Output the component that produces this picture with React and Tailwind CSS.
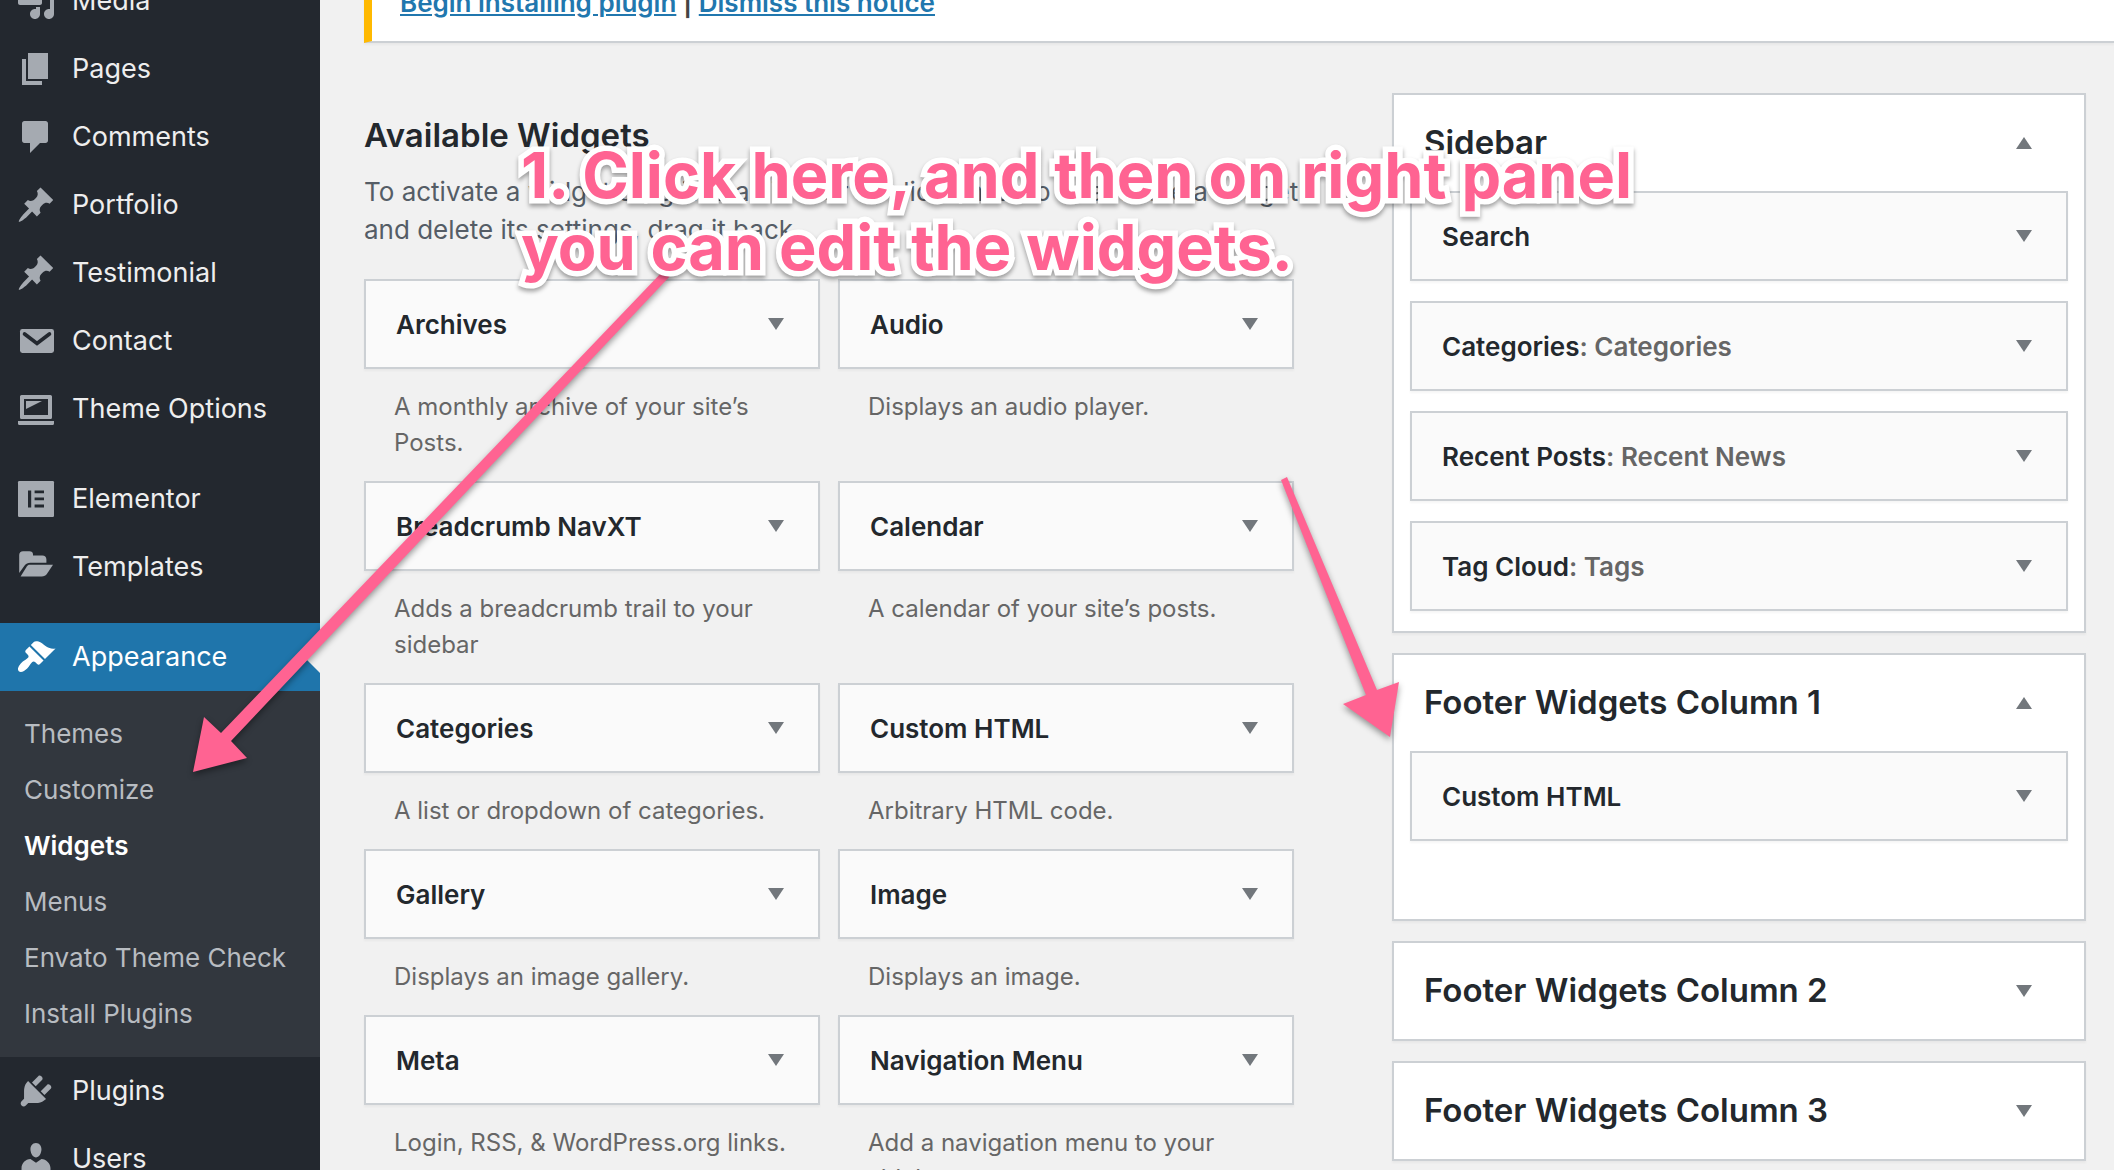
import React from "react";

const ICONS = {
  media: (
    <path d="M13 11V4c0-.55-.45-1-1-1h-1.670L9 1H5L3.670 3H2c-.55 0-1 .45-1 1v7c0 .55.45 1 1 1h10c.55 0 1-.45 1-1zM14 6h5v10.500c0 1.380-1.120 2.500-2.500 2.500S14 17.880 14 16.500s1.120-2.500 2.500-2.500c.17 0 .34.02.5.05V9h-3V6zm-4 8.050V13h2v3.500c0 1.380-1.120 2.500-2.500 2.500S7 17.880 7 16.500 8.120 14 9.500 14c.17 0 .34.02.5.05z" />
  ),
  page: <path d="M6 15V2h10v13H6zM5 16h8v2H3V5h2v11z" />,
  comment: (
    <path d="M4.200 2h10.600c.66 0 1.200.54 1.200 1.200v8.600c0 .66-.54 1.200-1.200 1.200H12l-5 5v-5H4.200c-.66 0-1.200-.54-1.200-1.200V3.200C3 2.540 3.540 2 4.200 2z" />
  ),
  pin: (
    <path d="M10.440 3.020l1.820-1.820 6.360 6.350-1.830 1.820c-1.050-.68-2.480-.57-3.410.36l-.75.75c-.92.93-1.040 2.350-.35 3.410l-1.830 1.820-2.410-2.410-2.800 2.790c-.42.42-3.380 2.710-3.800 2.290s1.860-3.390 2.280-3.810l2.790-2.790L4.100 9.360l1.830-1.820c1.050.69 2.480.57 3.400-.36l.75-.75c.93-.92 1.050-2.350.36-3.410z" />
  ),
  mail: (
    <>
      <rect x="2" y="4" width="17" height="12" rx="1.200" />
      <path d="M4.300 6.500l6.200 4.700 6.200-4.700" fill="none" stroke="#23282f" strokeWidth="1.900" strokeLinecap="round" />
    </>
  ),
  screen: (
    <>
      <path fillRule="evenodd" d="M2.800 3h14.400c.44 0 .8.36.8.8v10.400c0 .44-.36.8-.8.8H2.800c-.44 0-.8-.36-.8-.8V3.800c0-.44.36-.8.8-.8zM4 5v8h12V5H4z" />
      <path d="M5 6h8l-8 4V6zM1 16h18v1.200c0 .44-.36.8-.8.8H1.800c-.44 0-.8-.36-.8-.8V16z" />
    </>
  ),
  elementor: (
    <>
      <rect x="1" y="1" width="18" height="18" rx=".6" />
      <path d="M6 5.700h1.600v8.500H6zM9.300 5.700H14V7.100H9.300zM9.300 9.200H14v1.400H9.300zM9.300 12.800H14v1.400H9.300z" fill="#23282f" />
    </>
  ),
  folder: (
    <>
      <path d="M1.600 13V4c0-1.100.8-1.900 1.900-1.900h3.200c1.100 0 1.800.6 1.800 1.500v.7h4.700c1.200 0 2 .8 2 1.900v1.700H7.200c-1.400 0-2.100.4-2.900 1.400z" />
      <path d="M6.800 8.900h11.700l-2.900 4.300c-.8 1.100-1.500 1.500-2.800 1.500H2.300l3.100-4.900c.4-.6.8-.9 1.400-.9z" />
    </>
  ),
  brush: (
    <path d="M14.480 11.060L7.410 3.990l1.500-1.500c.5-.56 2.300-.47 3.510.32 1.210.8 1.430 1.280 2.910 2.100 1.180.64 2.450 1.260 4.450.85zm-.71.71L6.700 4.700 4.930 6.470c-.39.39-.39 1.020 0 1.410l1.060 1.060c.39.39.39 1.030 0 1.420-.6.6-1.430 1.110-2.210 1.690-.35.26-.7.53-1.010.84C1.430 14.230.4 16.080 1.400 17.070c.99 1 2.840-.03 4.180-1.360.31-.31.58-.66.85-1.020.57-.78 1.080-1.610 1.690-2.210.39-.39 1.020-.39 1.410 0l1.060 1.060c.39.39 1.020.39 1.410 0z" />
  ),
  plug: (
    <path d="M13.110 4.360L9.870 7.600 8 5.730l3.240-3.240c.35-.34 1.050-.2 1.560.32.52.51.66 1.210.31 1.550zm-8 1.770l.91-1.120 9.010 9.010-1.190.84c-.71.71-2.630 1.160-3.820 1.160H6.140L4.900 17.260c-.59.59-1.540.59-2.120 0-.59-.58-.59-1.530 0-2.120l1.240-1.240v-3.880c0-1.130.4-3.190 1.090-3.890zm7.260 3.970l3.240-3.240c.34-.35 1.040-.21 1.550.31.52.51.66 1.210.31 1.550l-3.240 3.250z" />
  ),
  user: (
    <path d="M10 9.250c-2.270 0-2.730-3.440-2.730-3.440C7 4.020 7.820 2 9.970 2c2.160 0 2.980 2.020 2.710 3.810 0 0-.41 3.440-2.680 3.440zm0 2.570L12.720 10c2.390 0 4.520 2.330 4.520 4.530v2.490s-3.650 1.130-7.240 1.130c-3.650 0-7.240-1.130-7.240-1.130v-2.490c0-2.250 1.940-4.480 4.470-4.480z" />
  ),
};

const SUBMENU = ["Themes", "Customize", "Widgets", "Menus", "Envato Theme Check", "Install Plugins"];

const AVAILABLE = [
  ["Archives", "A monthly archive of your site’s Posts."],
  ["Audio", "Displays an audio player."],
  ["Breadcrumb NavXT", "Adds a breadcrumb trail to your sidebar"],
  ["Calendar", "A calendar of your site’s posts."],
  ["Categories", "A list or dropdown of categories."],
  ["Custom HTML", "Arbitrary HTML code."],
  ["Gallery", "Displays an image gallery."],
  ["Image", "Displays an image."],
  ["Meta", "Login, RSS, & WordPress.org links."],
  ["Navigation Menu", "Add a navigation menu to your sidebar."],
];

const AREAS = [
  {
    name: "Sidebar",
    open: true,
    widgets: [["Search"], ["Categories", "Categories"], ["Recent Posts", "Recent News"], ["Tag Cloud", "Tags"]],
  },
  { name: "Footer Widgets Column 1", open: true, spare: true, widgets: [["Custom HTML"]] },
  { name: "Footer Widgets Column 2", widgets: [] },
  { name: "Footer Widgets Column 3", widgets: [] },
];

function MenuItem({ icon, label, active }) {
  return (
    <a
      href="#"
      className={
        active
          ? "relative flex h-[68px] items-center gap-4 bg-[#1f75ab] pl-4 text-[27px] text-white"
          : "flex h-[68px] items-center gap-4 pl-4 text-[27px] text-[#eeeeee]"
      }
    >
      <svg
        viewBox="0 0 20 20"
        aria-hidden="true"
        className={active ? "size-10 shrink-0 fill-white" : "size-10 shrink-0 fill-[#a5aab1]"}
      >
        {ICONS[icon]}
      </svg>
      <span>{label}</span>
      {active && (
        <svg viewBox="0 0 16 32" aria-hidden="true" className="absolute top-[18px] right-0 h-8 w-4 fill-[#f1f1f1]">
          <path d="M16 0v32L0 16z" />
        </svg>
      )}
    </a>
  );
}

function Triangle({ up }) {
  return (
    <svg viewBox="0 0 16 12" aria-hidden="true" className="h-3 w-4 shrink-0 fill-[#72777c]">
      <path d={up ? "M0 12h16L8 0z" : "M0 0h16L8 12z"} />
    </svg>
  );
}

function WidgetBar({ title, subtitle }) {
  return (
    <button
      type="button"
      className="flex h-[90px] w-full items-center justify-between border-2 border-[#ccd0d4] bg-[#fafafa] pr-[34px] pl-[30px] text-left text-[26px] font-semibold text-[#23282d] shadow-[0_2px_2px_rgba(0,0,0,0.04)]"
    >
      <span>
        {title}
        {subtitle && <span className="text-[#666666]">: {subtitle}</span>}
      </span>
      <Triangle />
    </button>
  );
}

function WidgetArea({ area }) {
  return (
    <section className="border-2 border-[#ccd0d4] bg-white shadow-[0_2px_2px_rgba(0,0,0,0.04)]">
      <h2>
        <button
          type="button"
          aria-expanded={Boolean(area.open)}
          className="flex h-24 w-full items-center justify-between pr-[52px] pl-[30px] text-left text-[33px] font-semibold text-[#23282d]"
        >
          {area.name}
          <Triangle up={area.open} />
        </button>
      </h2>
      {area.open && (
        <div className={area.spare ? "flex flex-col gap-5 px-4 pb-[78px]" : "flex flex-col gap-5 px-4 pb-5"}>
          {area.widgets.map(([title, subtitle]) => (
            <WidgetBar key={title} title={title} subtitle={subtitle} />
          ))}
        </div>
      )}
    </section>
  );
}

function Annotation() {
  return (
    <div className="pointer-events-none absolute inset-0">
      <svg
        viewBox="0 0 2114 1170"
        aria-hidden="true"
        className="absolute top-0 left-0 h-[1170px] w-[2114px] fill-[#ff6392] drop-shadow-[0_3px_3px_rgba(0,0,0,0.4)]"
      >
        <path d="M193 772L204 717L221 733L663 271L672 274L231 741L247 758Z" />
        <path d="M1390 737L1343 704L1366 695L1281 480L1287 477L1377 690L1399 682Z" />
      </svg>
      <p className="absolute top-[139px] left-[521px] text-[63px] leading-[72px] font-bold whitespace-nowrap text-[#ff6392] drop-shadow-[0_3px_2px_rgba(0,0,0,0.35)] [-webkit-text-stroke:11px_white] [paint-order:stroke_fill] [stroke-linejoin:round]">
        1. Click here, and then on right panel
        <br />
        you can edit the widgets.
      </p>
    </div>
  );
}

export default function App() {
  return (
    <div className="relative flex h-screen overflow-hidden bg-[#f1f1f1] font-['Inter',sans-serif]">
      <nav aria-label="Admin menu" className="w-80 shrink-0 bg-[#23282f]">
        <div className="-mt-[33px]">
          <MenuItem icon="media" label="Media" />
          <MenuItem icon="page" label="Pages" />
          <MenuItem icon="comment" label="Comments" />
          <MenuItem icon="pin" label="Portfolio" />
          <MenuItem icon="pin" label="Testimonial" />
          <MenuItem icon="mail" label="Contact" />
          <MenuItem icon="screen" label="Theme Options" />
        </div>
        <div className="mt-[22px]">
          <MenuItem icon="elementor" label="Elementor" />
          <MenuItem icon="folder" label="Templates" />
        </div>
        <div className="mt-[22px]">
          <MenuItem icon="brush" label="Appearance" active />
          <ul className="bg-[#32373e] pt-[14px] pb-4">
            {SUBMENU.map((label) => (
              <li key={label}>
                <a
                  href="#"
                  className={
                    label === "Widgets"
                      ? "flex h-14 items-center pl-6 text-[26px] font-semibold text-white"
                      : "flex h-14 items-center pl-6 text-[26px] text-[#b8bcc1]"
                  }
                >
                  {label}
                </a>
              </li>
            ))}
          </ul>
          <MenuItem icon="plug" label="Plugins" />
          <MenuItem icon="user" label="Users" />
        </div>
      </nav>

      <main className="min-w-0 flex-1 pl-11">
        <div className="-mt-4 border-b-2 border-l-8 border-b-[#ccd0d4] border-l-[#ffb900] bg-white pb-[19px] pl-7 text-[26px] leading-[38px] font-semibold text-[#444444] shadow-[0_2px_2px_rgba(0,0,0,0.04)]">
          <a href="#" className="text-[#2177ae] underline">Begin installing plugin</a>
          {" | "}
          <a href="#" className="text-[#2177ae] underline">Dismiss this notice</a>
        </div>

        <div className="mt-[50px] mr-7 grid grid-cols-[930fr_694fr] items-start gap-x-[98px]">
          <section className="pt-[22px]">
            <h2 className="text-[33px] leading-10 font-semibold text-[#23282d]">Available Widgets</h2>
            <p className="mt-[18px] -mr-4 text-[26px] leading-[38px] text-[#555d66]">
              To activate a widget drag it to a sidebar or click on it. To deactivate a widget and delete its settings,
              drag it back.
            </p>
            <div className="mt-[30px] grid grid-cols-2 gap-x-[18px]">
              {AVAILABLE.map(([title, description]) => (
                <div key={title}>
                  <WidgetBar title={title} />
                  <p className="px-[30px] py-5 text-[24px] leading-9 text-[#666666]">{description}</p>
                </div>
              ))}
            </div>
          </section>

          <div className="flex flex-col gap-5">
            {AREAS.map((area) => (
              <WidgetArea key={area.name} area={area} />
            ))}
          </div>
        </div>
      </main>

      <Annotation />
    </div>
  );
}
